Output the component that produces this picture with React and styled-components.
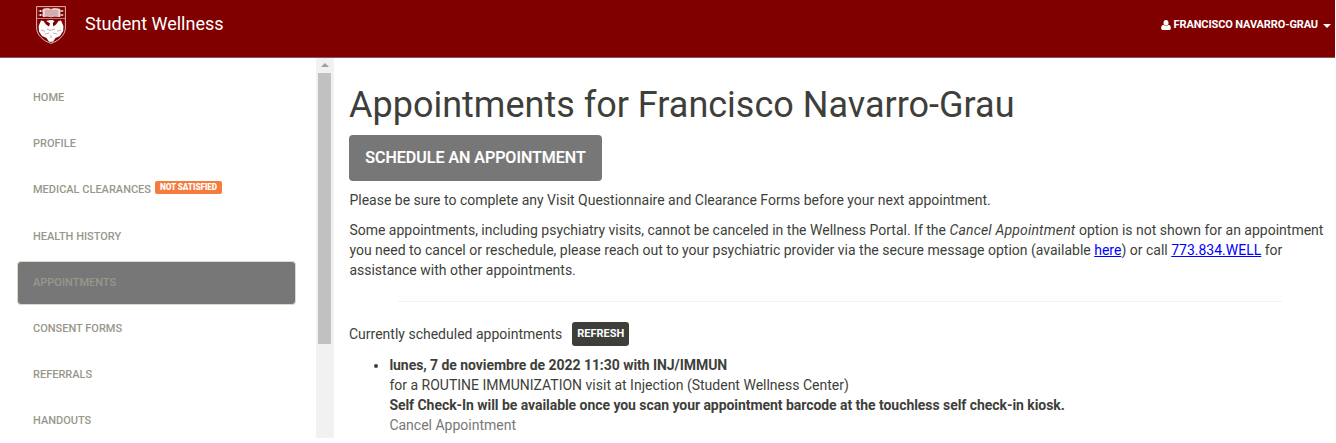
import React from 'react';
import styled, { createGlobalStyle } from 'styled-components';

const Global = createGlobalStyle`
  * { box-sizing: border-box; }
  body { margin: 0; background: #fff; color: #3e3f3a; font: 14px/20px Roboto, sans-serif; overflow: hidden; }
`;

const Page = styled.div`
  display: flex;
  flex-direction: column;
  width: 1335px;
  height: 438px;
  overflow: hidden;
`;
const Header = styled.header`
  flex: none;
  display: flex;
  align-items: flex-start;
  height: 58px;
  padding: 0 4px 0 36px;
  background: #800000;
  border-bottom: 1px solid #7c5a58;
  color: #fff;
`;
const Crest = styled.svg`
  width: 30px;
  height: 38px;
  margin-top: 6px;
`;
const Brand = styled.div`
  margin: 14px 0 0 19px;
  font-size: 18px;
`;
const UserMenu = styled.div`
  display: flex;
  align-items: center;
  margin: 15px 0 0 auto;
  font-size: 11px;
  font-weight: 700;
  letter-spacing: -0.12px;
  white-space: nowrap;
`;
const UserIcon = styled.svg`
  width: 10px;
  height: 10px;
  margin-right: 3px;
`;
const Caret = styled.span`
  margin: 2px 0 0 5px;
  border: 4px solid transparent;
  border-top-color: #fff;
  border-bottom: 0;
`;
const Body = styled.div`
  flex: 1;
  min-height: 0;
  display: flex;
`;
const Sidebar = styled.nav`
  flex: none;
  width: 316px;
  padding: 19px 20px 0 17px;
  overflow: hidden;
`;
const NavItem = styled.a`
  display: flex;
  height: 44px;
  margin-bottom: 2.15px;
  padding: 10px 15px;
  border: 1px solid ${p => (p.$active ? '#dfd7ca' : 'transparent')};
  border-radius: 4px;
  background: ${p => (p.$active ? '#777' : 'transparent')};
  color: #98978b;
  font-size: 11px;
  font-weight: 500;
  white-space: nowrap;

  &:nth-child(4) {
    padding-top: 11px;
    margin-bottom: 1.3px;
  }
  &:nth-child(5) {
    padding-top: 11px;
    margin-bottom: 3px;
  }
`;
const Badge = styled.span`
  width: 67px;
  height: 13px;
  margin: 1px 0 0 4px;
  border-radius: 2px;
  background: #f47c3c;
  color: #fff;
  font-size: 8.25px;
  font-weight: 900;
  letter-spacing: -0.09px;
  line-height: 13px;
  text-align: center;
`;
const ScrollTrack = styled.div`
  flex: none;
  display: flex;
  flex-direction: column;
  align-items: center;
  width: 18px;
  padding-right: 1px;
  background: #f1f1f1;
`;
const ScrollArrow = styled.span`
  margin: 5px 0 6px;
  border: 4px solid transparent;
  border-top: 0;
  border-bottom-color: #a0a0a0;
`;
const ScrollThumb = styled.div`
  width: 13px;
  height: 271px;
  background: #c1c1c1;
`;
const Main = styled.main`
  flex: 1;
  min-width: 0;
  padding: 27px 8px 0 15px;
`;
const Title = styled.h1`
  margin: 0 0 10px;
  font-size: 36px;
  line-height: 40px;
  font-weight: 400;
`;
const PrimaryButton = styled.button`
  display: block;
  width: 253px;
  height: 46px;
  padding: 0;
  border: 0;
  border-radius: 4px;
  background: #777;
  color: #fff;
  font: 500 16px/22px Roboto, sans-serif;
  -webkit-text-stroke: 0.2px #fff;
`;
const Paragraph = styled.p`
  margin: ${p => p.$top} 0 0;
  padding-left: 0.4px;
`;
const Emphasis = styled.em`
  letter-spacing: 0.17px;
`;
const Link = styled.a`
  color: #00f;
  text-decoration: underline;
`;
const Divider = styled.hr`
  height: 1px;
  margin: 21px 45px 20px 49px;
  border: 0;
  background: #f2f2f2;
`;
const Scheduled = styled.div`
  display: flex;
  align-items: center;
`;
const RefreshButton = styled.button`
  width: 57px;
  height: 24px;
  margin-left: 10px;
  padding: 0;
  border: 0;
  border-radius: 3px;
  background: #3e3f3a;
  color: #fff;
  font: 700 11px/16px Roboto, sans-serif;
`;
const List = styled.ul`
  margin: 9px 0 0;
  padding-left: 40.4px;
`;
const Line = styled.div`
  font-weight: ${p => (p.$bold ? 700 : 400)};
  letter-spacing: ${p => (p.$bold ? '-0.052px' : 'normal')};
  color: ${p => (p.$muted ? '#777' : 'inherit')};
`;

const items = ['Home', 'Profile', 'Medical Clearances', 'Health History', 'Appointments', 'Consent Forms', 'Referrals', 'Handouts'];

function Shield() {
  return (
    <Crest viewBox="0 0 30 38" fill="none" stroke="#fff">
      <path d="M.6.6H29.4V22C29.4 29 22 35.5 15 37.3 8 35.5.6 29 .6 22Z" strokeWidth=".9" opacity=".8" />
      <path d="M1 12.5H29" strokeWidth=".8" opacity=".6" />
      <path d="M7 3.2C10 2.2 13 2.2 15 3.4 17 2.2 20 2.2 24 3.2V10.7C20 10 17 10 15 11 13 10 10 10 7 10.7Z" fill="#fff" fillOpacity=".8" strokeWidth=".6" />
      <path d="M9 5H14M16 5H22M9 7H14M16 7H22M9 9H14M16 9H22M15 3.5V11" stroke="#800000" strokeWidth=".6" opacity=".5" />
      <path d="M2.5 5H7M2.5 9H7M24 5H27.5M24 9H27.5M4.5 4V6M4.5 8V10M26 4V6M26 8V10" strokeWidth=".8" />
      <path d="M10 15 13 14.2 16.5 14 18.5 15.3 16.8 17 17.3 20.5 20 18.5 22.5 15 25 14.5 27.4 20 27.2 25 24 30 19.5 32 17 35.7H13L10.5 32 6 30 3 25.5 2.7 20 5 14.5 7.5 15 10 18.5 13 20.5 14 17.5 12.3 16.3Z" fill="#fff" stroke="none" />
      <path d="M5 24 9 25.2M25 24 21 25.2M11 23 14 24.5 19 23M9 28 13 27M17 27 21 28M15 29V32" stroke="#800000" strokeWidth=".7" opacity=".5" />
    </Crest>
  );
}

export default function App() {
  return (
    <Page>
      <Global />
      <Header>
        <Shield />
        <Brand>Student Wellness</Brand>
        <UserMenu>
          <UserIcon viewBox="0 0 10 10" fill="#fff">
            <ellipse cx="5" cy="2.7" rx="2.5" ry="2.7" />
            <path d="M2.3 4.8C.7 5.2.2 6.6.2 8.2.2 9.3.9 10 1.8 10H8.2C9.1 10 9.8 9.3 9.8 8.2 9.8 6.6 9.3 5.2 7.7 4.8 6.2 6.2 3.8 6.2 2.3 4.8Z" />
          </UserIcon>
          FRANCISCO NAVARRO-GRAU
          <Caret />
        </UserMenu>
      </Header>
      <Body>
        <Sidebar>
          {items.map(label => (
            <NavItem key={label} $active={label === 'Appointments'}>
              {label.toUpperCase()}
              {label === 'Medical Clearances' && <Badge>NOT SATISFIED</Badge>}
            </NavItem>
          ))}
        </Sidebar>
        <ScrollTrack>
          <ScrollArrow />
          <ScrollThumb />
        </ScrollTrack>
        <Main>
          <Title>Appointments for Francisco Navarro-Grau</Title>
          <PrimaryButton>SCHEDULE AN APPOINTMENT</PrimaryButton>
          <Paragraph $top="9px">
            Please be sure to complete any Visit Questionnaire and Clearance Forms before your next appointment.
          </Paragraph>
          <Paragraph $top="10px">
            Some appointments, including psychiatry visits, cannot be canceled in the Wellness Portal. If the{' '}
            <Emphasis>Cancel Appointment</Emphasis> option is not shown for an appointment you need to cancel or
            reschedule, please reach out to your psychiatric provider via the secure message option (available{' '}
            <Link>here</Link>) or call <Link>773.834.WELL</Link> for assistance with other appointments.
          </Paragraph>
          <Divider />
          <Scheduled>
            Currently scheduled appointments
            <RefreshButton>REFRESH</RefreshButton>
          </Scheduled>
          <List>
            <li>
              <Line $bold>lunes, 7 de noviembre de 2022 11:30 with INJ/IMMUN</Line>
              <Line>for a ROUTINE IMMUNIZATION visit at Injection (Student Wellness Center)</Line>
              <Line $bold>Self Check-In will be available once you scan your appointment barcode at the touchless self check-in kiosk.</Line>
              <Line $muted>Cancel Appointment</Line>
            </li>
          </List>
        </Main>
      </Body>
    </Page>
  );
}
